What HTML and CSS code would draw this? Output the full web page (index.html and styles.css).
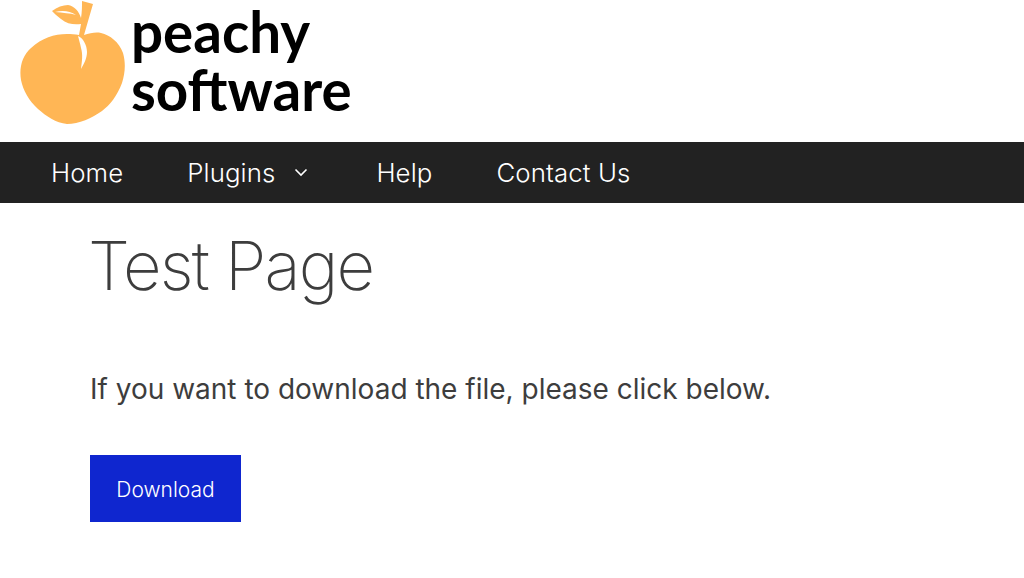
FILE: index.html
```html
<!DOCTYPE html>
<html lang="en">
<head>
<meta charset="utf-8">
<title>Test Page</title>
<link rel="stylesheet" href="styles.css">
</head>
<body>
<header class="site-header">
  <svg class="peach" viewBox="0 0 110 125" width="110" height="125" aria-hidden="true">
    <path class="fill" d="M59 35 L61 24 C54 25 47 24 41 19 C37 16 34 13 32 11 C37 7 43 5 48 5 C54 6 59 11 61 18 C62 12 62 6 62 1 L73 4 L64 35 C70 33 76 32 81 33 C90 35 99 42 103 53 C106 63 105 74 102 83 C97 96 90 105 82 111 C72 118 59 124 47 124 C36 123 26 116 18 109 C9 101 3 90 1 80 C-1 68 2 56 11 48 C22 38 34 34 47 34 C51 34 55 34 59 35 Z"/>
    <path class="vein" d="M35 12 C43 10 50 11 56 15 C50 13 43 13 35 12 Z"/>
    <path class="vein" d="M58 36 C63 38 67 45 67 52 C67 58 64 64 61 69 C62 61 63 55 61 48 C60 43 59 40 58 36 Z"/>
  </svg>
  <div class="wordmark">
    <span class="wordmark-line">peachy</span>
    <span class="wordmark-line">software</span>
  </div>
</header>
<nav class="main-nav">
  <a class="nav-item" href="#">Home</a>
  <a class="nav-item" href="#">Plugins
    <svg class="caret" viewBox="0 0 14 9" width="14" height="9" aria-hidden="true"><path d="M1.5 1.5 L7 7 L12.5 1.5"/></svg>
  </a>
  <a class="nav-item" href="#">Help</a>
  <a class="nav-item" href="#">Contact Us</a>
</nav>
<main class="content">
  <h1 class="title">Test Page</h1>
  <p class="lead">If you want to download the file, please click below.</p>
  <a class="button" href="#">Download</a>
</main>
</body>
</html>
```
FILE: styles.css
```css
* { box-sizing: border-box; }
html, body { margin: 0; padding: 0; }
body {
  width: 1024px;
  height: 578px;
  overflow: hidden;
  background: #fff;
  color: #3d3d3d;
  font-family: Inter, "Liberation Sans", sans-serif;
}
.site-header {
  height: 142px;
  display: flex;
  align-items: flex-start;
  padding-left: 20px;
}
.peach { display: block; flex: none; }
.peach .fill { fill: #ffb655; }
.peach .vein { fill: #fff; }
.wordmark {
  margin-left: 1px;
  padding-top: 2px;
  display: flex;
  flex-direction: column;
  color: #000;
  font-family: Lato, sans-serif;
  font-weight: 700;
  font-size: 56.5px;
  line-height: 58px;
}
.main-nav {
  height: 61px;
  background: #222;
  display: flex;
  align-items: center;
  padding-left: 51px;
  gap: 64px;
}
.nav-item {
  color: #fff;
  font-size: 25.8px;
  letter-spacing: 0.1px;
  font-weight: 300;
  text-decoration: none;
  display: flex;
  align-items: center;
  gap: 19px;
}
.caret { margin-right: 4px; }
.caret path { fill: none; stroke: #fff; stroke-width: 1.6; }
.content { padding-left: 90px; }
.title {
  margin: 22px 0 0 -2px;
  font-size: 67px;
  line-height: 82px;
  font-weight: 250;
  letter-spacing: -1.8px;
}
.lead {
  margin: 62px 0 0;
  font-size: 28px;
  line-height: 40px;
  font-weight: 400;
}
.button {
  display: flex;
  align-items: center;
  justify-content: center;
  width: 151px;
  height: 67px;
  margin-top: 46px;
  padding-top: 1px;
  background: #0f26cf;
  color: #fff;
  font-size: 21px;
  font-weight: 300;
  text-decoration: none;
}
```
